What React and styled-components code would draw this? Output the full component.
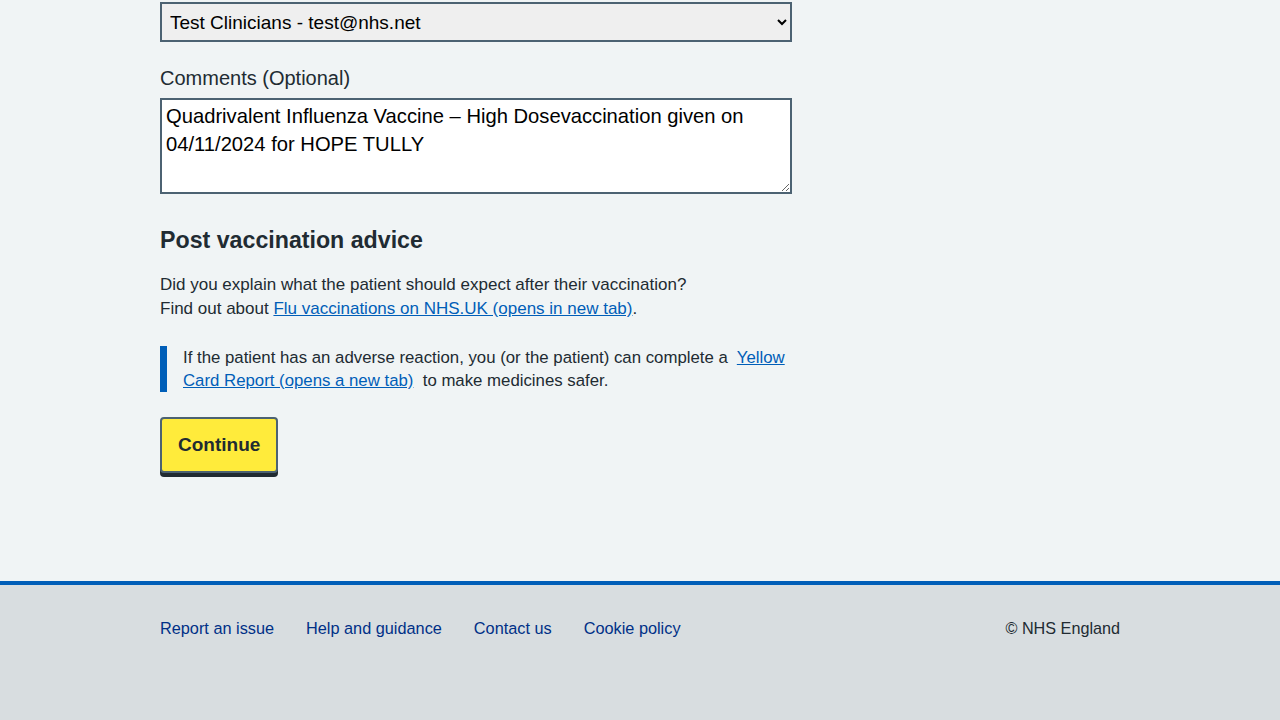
import styled, { createGlobalStyle } from "styled-components";

const GlobalStyle = createGlobalStyle`
  html, body {
    margin: 0;
    padding: 0;
    background: #f0f4f5;
  }
  body {
    font-family: "Liberation Sans", Arial, sans-serif;
    color: #212b32;
  }
`;

const App = () => {
  return (
    <>
      <GlobalStyle />
      <Page>
        <Main>
          <Column>
            <Select defaultValue="test">
              <option value="test">Test Clinicians - test@nhs.net</option>
            </Select>

            <Label htmlFor="comments">Comments (Optional)</Label>
            <TextArea
              id="comments"
              rows={3}
              defaultValue="Quadrivalent Influenza Vaccine – High Dosevaccination given on 04/11/2024 for HOPE TULLY"
            />

            <Heading>Post vaccination advice</Heading>
            <Body>
              Did you explain what the patient should expect after their vaccination?
              <br />
              Find out about <Link href="#">Flu vaccinations on NHS.UK (opens in new tab)</Link>.
            </Body>

            <Inset>
              If the patient has an adverse reaction, you (or the patient) can complete a&nbsp;{" "}
              <Link href="#">Yellow Card Report (opens a new tab)</Link>&nbsp; to make medicines safer.
            </Inset>

            <Button type="button">Continue</Button>
          </Column>
        </Main>

        <Footer>
          <FooterInner>
            <FooterLinks>
              <FooterLink href="#">Report an issue</FooterLink>
              <FooterLink href="#">Help and guidance</FooterLink>
              <FooterLink href="#">Contact us</FooterLink>
              <FooterLink href="#">Cookie policy</FooterLink>
            </FooterLinks>
            <Copyright>© NHS England</Copyright>
          </FooterInner>
        </Footer>
      </Page>
    </>
  );
};

export default App;

const Page = styled.div`
  display: flex;
  flex-direction: column;
  min-height: 720px;
`;

const Main = styled.main`
  flex: 1;
  width: 960px;
  margin: 0 auto;
  padding-top: 2px;
  padding-bottom: 104px;
`;

const Column = styled.div`
  width: 632px;
  display: flex;
  flex-direction: column;
  align-items: flex-start;
`;

const Select = styled.select`
  width: 632px;
  height: 40px;
  box-sizing: border-box;
  border: 2px solid #4c6272;
  border-radius: 0;
  background: #efefef;
  color: #000;
  font-family: inherit;
  font-size: 19px;
  padding: 0 4px 0 4px;
`;

const Label = styled.label`
  margin-top: 22px;
  margin-bottom: 6px;
  font-size: 20px;
  line-height: 28px;
  color: #212b32;
`;

const TextArea = styled.textarea`
  width: 632px;
  height: 96px;
  box-sizing: border-box;
  border: 2px solid #4c6272;
  border-radius: 0;
  background: #fff;
  color: #000;
  font-family: inherit;
  font-size: 20.2px;
  line-height: 28px;
  padding: 2px 4px;
  resize: vertical;
`;

const Heading = styled.h2`
  margin: 30px 0 17px;
  font-size: 23.2px;
  line-height: 32px;
  font-weight: 700;
  color: #212b32;
`;

const Body = styled.p`
  margin: 0 0 25px;
  font-size: 17px;
  line-height: 24px;
`;

const Link = styled.a`
  color: #005eb8;
  text-decoration: underline;
`;

const Inset = styled.div`
  border-left: 7px solid #005eb8;
  padding: 0 0 0 16px;
  font-size: 16.8px;
  line-height: 23px;
  margin-bottom: 25px;
`;

const Button = styled.button`
  height: 56px;
  box-sizing: border-box;
  padding: 0 16px;
  background: #ffeb3b;
  color: #212b32;
  border: 2px solid #4c6272;
  border-radius: 4px;
  box-shadow: 0 4px 0 #212b32;
  font-family: inherit;
  font-size: 19px;
  font-weight: 700;
  cursor: pointer;
`;

const Footer = styled.footer`
  border-top: 4px solid #005eb8;
  background: #d8dde0;
  height: 135px;
`;

const FooterInner = styled.div`
  width: 960px;
  margin: 0 auto;
  padding-top: 33px;
  display: flex;
  justify-content: space-between;
  align-items: flex-start;
`;

const FooterLinks = styled.div`
  display: flex;
  gap: 32px;
`;

const FooterLink = styled.a`
  color: #003087;
  text-decoration: none;
  font-size: 16.3px;
  line-height: 20px;
`;

const Copyright = styled.p`
  margin: 0;
  font-size: 16.2px;
  line-height: 20px;
  color: #212b32;
`;
